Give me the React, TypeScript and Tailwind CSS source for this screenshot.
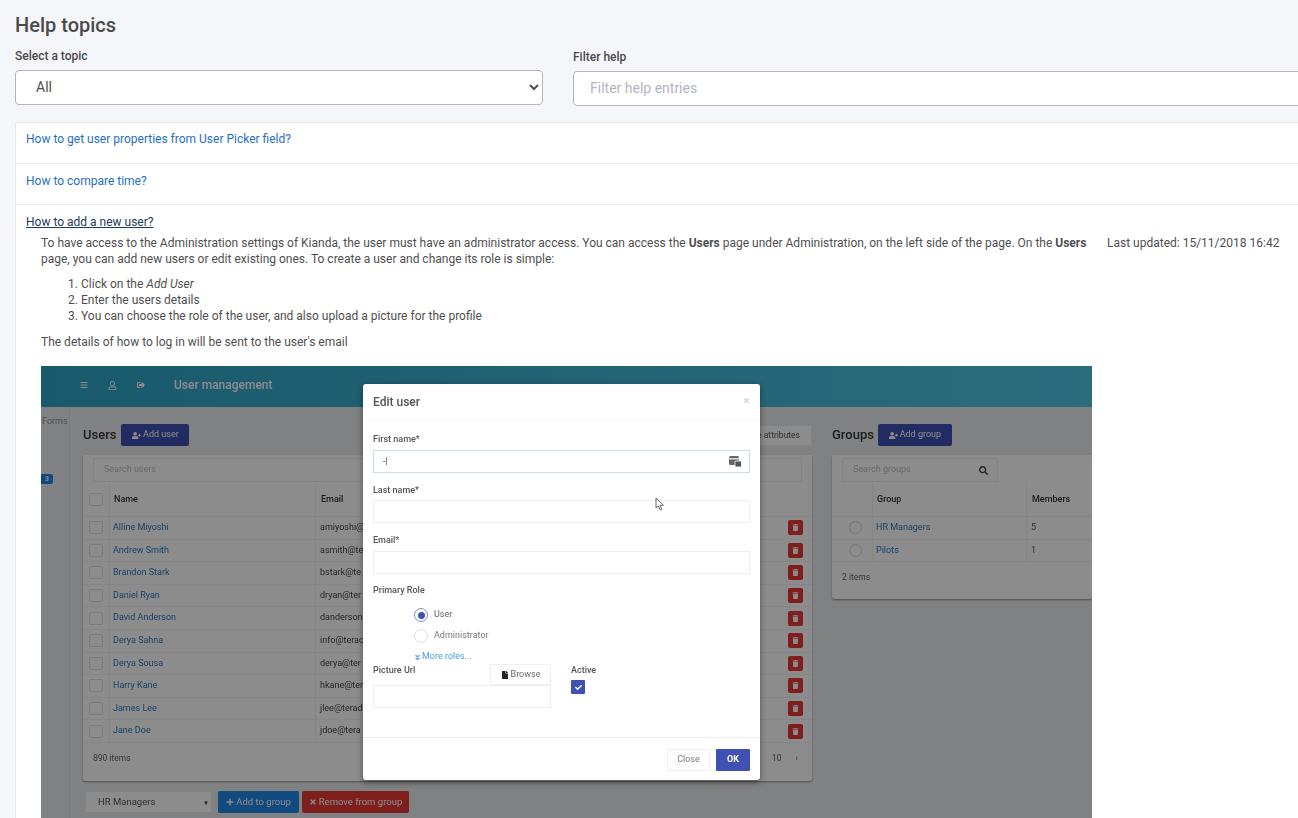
import { FaAngleDoubleDown, FaBars, FaCheck, FaFile, FaPlus, FaRegUser, FaSearch, FaSignOutAlt, FaTimes, FaTrash, FaUserPlus } from "react-icons/fa";

const users = [
  ["Alline Miyoshi", "amiyoshi@"],
  ["Andrew Smith", "asmith@te"],
  ["Brandon Stark", "bstark@te"],
  ["Daniel Ryan", "dryan@ter"],
  ["David Anderson", "danderson"],
  ["Derya Sahna", "info@terac"],
  ["Derya Sousa", "derya@ter"],
  ["Harry Kane", "hkane@ter"],
  ["James Lee", "jlee@terad"],
  ["Jane Doe", "jdoe@tera"],
];

function UserRow({ name, email }: { name: string; email: string }) {
  return (
    <div className="flex h-[22.6px] items-center border-b border-[#f4f4f4] text-[9px]">
      <div className="flex w-[26px] shrink-0 justify-center">
        <div className="h-[13px] w-[14px] rounded-[2px] border border-[#e2e2e2]" />
      </div>
      <div className="flex h-full w-[207px] shrink-0 items-center border-x border-[#f4f4f4] pl-[3px] text-[#2b79c2]">{name}</div>
      <div className="grow pl-[4px] text-[#444]">{email}</div>
      <div className="flex w-[33px] shrink-0 justify-center">
        <div className="flex h-[15px] w-[15px] items-center justify-center rounded-[2px] bg-[#e53935] text-white">
          <FaTrash className="text-[7px]" />
        </div>
      </div>
    </div>
  );
}

function ImageShot() {
  return (
    <div className="relative h-[452px] w-[1051px] overflow-hidden bg-[#eaebed] text-[#333] blur-[0.5px]">
      <div className="flex h-[41px] items-center bg-gradient-to-r from-[#2ea3c4] to-[#4fc5e4] pb-[3px] pl-[39px] text-white">
        <FaBars className="text-[8px]" />
        <FaRegUser className="ml-[20px] text-[9px]" />
        <FaSignOutAlt className="ml-[20px] text-[8px]" />
        <span className="ml-[29px] text-[12px] font-medium">User management</span>
      </div>
      <div className="flex h-[411px]">
        <div className="w-[29px] shrink-0 border-r border-[#dddddd] pt-[9px] text-[9px] leading-[11px]">
          <div className="pl-[1px] text-[#8f8f8f]">Forms</div>
          <div className="mt-[47px] flex h-[10px] w-[12px] items-center justify-center rounded-r-[2px] bg-[#1e88e5] text-[7px] font-bold text-white">3</div>
        </div>
        <div className="ml-[13px] w-[729px] shrink-0 pt-[17px]">
          <div className="flex h-[22px] items-center">
            <span className="-mt-[1px] text-[13px] font-medium">Users</span>
            <span className="ml-[5px] flex h-[22px] w-[68px] items-center justify-center gap-[2px] rounded-[2px] bg-[#3f51b5] text-[9px] text-white">
              <FaUserPlus className="text-[9px]" /> Add user
            </span>
            <span className="ml-auto flex h-[21px] w-[90px] items-center justify-end border border-[#eeeeee] bg-white pr-[11px] text-[8.5px] text-[#555]">e attributes</span>
          </div>
          <div className="mt-[9px] h-[326px] rounded-[2px] bg-white shadow-[0_1px_2px_rgba(0,0,0,0.4)]">
            <div className="px-[10px] pt-[3px]">
              <div className="flex h-[24px] items-center border border-[#eeeeee] pl-[10px] text-[9px] text-[#bdbdbd]">Search users</div>
            </div>
            <div className="flex h-[35px] items-center border-b border-[#f4f4f4] pt-[1px] text-[9px] font-medium">
              <div className="flex w-[26px] shrink-0 justify-center">
                <div className="h-[13px] w-[14px] rounded-[2px] border border-[#e2e2e2]" />
              </div>
              <div className="flex h-full w-[207px] shrink-0 items-center border-x border-[#f4f4f4] pl-[4px]">Name</div>
              <div className="pl-[5px]">Email</div>
            </div>
            {users.map((u) => (
              <UserRow key={u[0]} name={u[0]} email={u[1]} />
            ))}
            <div className="flex h-[41px] items-center justify-between pb-[10px] pl-[10px] pr-[14px] text-[8.5px] text-[#666]">
              <span>890 items</span>
              <span className="flex gap-[14px]">
                <span>10</span>
                <span>›</span>
              </span>
            </div>
          </div>
          <div className="mt-[10px] flex h-[22px] items-center text-[10px]">
            <div className="ml-[2px] flex h-full w-[127px] items-center justify-between border border-[#eeeeee] bg-white pl-[12px] pr-[2px] text-[9.5px] text-[#555]">
              HR Managers <span className="text-[6px] text-[#333]">▼</span>
            </div>
            <span className="ml-[6px] flex h-full w-[81px] items-center justify-center gap-[2px] rounded-[2px] bg-[#1e88e5] text-[9.5px] text-white">
              <FaPlus className="text-[8px]" /> Add to group
            </span>
            <span className="ml-[3px] flex h-full w-[107px] items-center justify-center gap-[2px] rounded-[2px] bg-[#e53935] text-[9.5px] text-white">
              <FaTimes className="text-[8px]" /> Remove from group
            </span>
          </div>
        </div>
        <div className="ml-[20px] grow pt-[17px]">
          <div className="flex h-[22px] items-center">
            <span className="-mt-[1px] text-[13px] font-medium">Groups</span>
            <span className="ml-[4px] flex h-[22px] w-[74px] items-center justify-center gap-[2px] rounded-[2px] bg-[#3f51b5] text-[9px] text-white">
              <FaUserPlus className="text-[9px]" /> Add group
            </span>
          </div>
          <div className="mt-[9px] h-[144px] rounded-[2px] bg-white shadow-[0_1px_2px_rgba(0,0,0,0.4)]">
            <div className="pl-[10px] pt-[3px]">
              <div className="flex h-[24px] w-[156px] items-center justify-between border border-[#eeeeee] pl-[10px] pr-[9px] text-[9px] text-[#bdbdbd]">
                Search groups <FaSearch className="text-[9px] text-[#444]" />
              </div>
            </div>
            <div className="flex h-[35px] items-center border-b border-[#f4f4f4] pt-[1px] text-[9px] font-medium">
              <div className="h-full w-[40px] shrink-0" />
              <div className="flex h-full w-[155px] shrink-0 items-center border-x border-[#f4f4f4] pl-[4px]">Group</div>
              <div className="pl-[5px]">Members</div>
            </div>
            {[["HR Managers", "5"], ["Pilots", "1"]].map((g) => (
              <div key={g[0]} className="flex h-[22.6px] items-center border-b border-[#f4f4f4] text-[9px]">
                <div className="flex w-[40px] shrink-0 justify-end pr-[10px]">
                  <div className="h-[13px] w-[13px] rounded-full border border-[#d8d8d8]" />
                </div>
                <div className="flex h-full w-[155px] shrink-0 items-center border-x border-[#f4f4f4] pl-[3px] text-[#2b79c2]">{g[0]}</div>
                <div className="pl-[4px] text-[#555]">{g[1]}</div>
              </div>
            ))}
            <div className="flex h-[32px] items-center pb-[2px] pl-[10px] text-[8.5px] text-[#666]">2 items</div>
          </div>
        </div>
      </div>

      <div className="absolute inset-0 bg-black/45" />

      <div className="absolute left-[322px] top-[18px] h-[396px] w-[397px] rounded-[3px] bg-white text-[9px] text-[#555] shadow-[0_2px_6px_rgba(0,0,0,0.45)]">
        <div className="flex h-[37px] items-center justify-between border-b border-[#f6f6f6] pl-[10px] pr-[10px]">
          <span className="text-[12px] font-medium">Edit user</span>
          <FaTimes className="-mt-[4px] text-[7px] text-[#cfcfcf]" />
        </div>
        <div className="px-[10px] pt-[12px]">
          <div className="h-[12px] font-medium leading-[12px]">First name*</div>
          <div className="mt-[5px] flex h-[23px] items-center justify-between border border-[#cfdde4] pl-[9px] pr-[7px]">
            <span className="text-[#444]">-|</span>
            <svg width="13" height="13" viewBox="0 0 13 13">
              <rect x="0" y="1" width="10" height="9" rx="1.5" fill="#666" />
              <rect x="0" y="3" width="10" height="1.5" fill="#ddd" />
              <rect x="6" y="6" width="6.5" height="6" rx="1" fill="#555" stroke="#fff" strokeWidth="0.8" />
            </svg>
          </div>
          <div className="mt-[11px] h-[12px] font-medium leading-[12px]">Last name*</div>
          <div className="mt-[4px] h-[23px] border border-[#ebeff2]" />
          <div className="mt-[11px] h-[12px] font-medium leading-[12px]">Email*</div>
          <div className="mt-[5px] h-[23px] border border-[#ebeff2]" />
          <div className="mt-[10px] h-[12px] font-medium leading-[12px]">Primary Role</div>
          <div className="ml-[41px] mt-[12px] flex h-[14px] items-center gap-[6px]">
            <span className="flex h-[14px] w-[14px] items-center justify-center rounded-full border border-[#7d8bd6]">
              <span className="h-[7px] w-[7px] rounded-full bg-[#3f51b5]" />
            </span>
            <span className="text-[#666]">User</span>
          </div>
          <div className="ml-[41px] mt-[7px] flex h-[14px] items-center gap-[6px]">
            <span className="h-[14px] w-[14px] rounded-full border border-[#dddddd]" />
            <span className="text-[#777]">Administrator</span>
          </div>
          <div className="ml-[41px] mt-[8px] flex h-[12px] items-center gap-[1px] text-[#4a9be0]">
            <FaAngleDoubleDown className="text-[7px]" /> More roles...
          </div>
          <div className="mt-[1px] flex">
            <div className="w-[178px] shrink-0">
              <div className="flex h-[21px] items-start justify-between">
                <span className="font-medium leading-[12px]">Picture Url</span>
                <span className="flex h-[21px] w-[61px] items-center justify-center gap-[2px] border border-[#f0f0f0] text-[#666]">
                  <FaFile className="text-[8px] text-[#222]" /> Browse
                </span>
              </div>
              <div className="h-[23px] border border-[#ebeff2]" />
            </div>
            <div className="ml-[20px]">
              <div className="font-medium leading-[12px]">Active</div>
              <div className="mt-[4px] flex h-[14px] w-[14px] items-center justify-center rounded-[1px] bg-[#3f51b5] text-white">
                <FaCheck className="text-[7px]" />
              </div>
            </div>
          </div>
        </div>
        <div className="mt-[29px] flex h-[42px] items-center justify-end gap-[6px] border-t border-[#eeeeee] px-[10px] pt-[3px]">
          <span className="flex h-[22px] w-[43px] items-center justify-center border border-[#f0f0f0] text-[#777]">Close</span>
          <span className="flex h-[22px] w-[34px] items-center justify-center rounded-[1px] bg-[#3f51b5] font-bold text-white">OK</span>
        </div>
        <svg className="absolute left-[292px] top-[113px]" width="10" height="15" viewBox="0 0 10 15">
          <path d="M1 1 L1 11 L3.4 8.9 L5.2 13 L6.8 12.2 L5 8.4 L8.4 8.2 Z" fill="#fff" stroke="#555" strokeWidth="0.9" />
        </svg>
      </div>
    </div>
  );
}

export default function App() {
  return (
    <div className="h-[818px] w-[1298px] overflow-hidden bg-[#f5f6fa] pl-[15px] pt-[13px] font-['Roboto',sans-serif] text-[12px] text-[#4f4f4f]">
      <h1 className="text-[20px] font-medium leading-[24px] text-[#4a4a4a]">Help topics</h1>
      <div className="mt-[11px] flex w-[1320px]">
        <div className="w-[528px] shrink-0">
          <label className="block text-[12px] font-medium leading-[16px] text-[#4a4a4a]">Select a topic</label>
          <select className="mt-[6px] block h-[35px] w-full rounded-[4px] border border-[#b5b5b8] bg-white pb-[2px] pl-[16px] pr-[8px] text-[14px] text-[#4f4f4f]">
            <option>All</option>
          </select>
        </div>
        <div className="ml-[30px] grow pt-[1px]">
          <label className="block text-[12px] font-medium leading-[16px] text-[#4a4a4a]">Filter help</label>
          <input
            placeholder="Filter help entries"
            className="mt-[6px] block h-[35px] w-full rounded-[4px] border border-[#b5b5b8] bg-white pb-[2px] pl-[16px] text-[14px] placeholder:text-[#b3b5c0]"
          />
        </div>
      </div>
      <div className="mt-[16px] w-[1320px] border border-[#e8ebee] bg-white">
        <div className="h-[41px] border-b border-[#e8ebee] pl-[10px] pt-[8px] leading-[16px] text-[#1f6fc4]">How to get user properties from User Picker field?</div>
        <div className="h-[41px] border-b border-[#e8ebee] pl-[10px] pt-[9px] leading-[16px] text-[#1f6fc4]">How to compare time?</div>
        <div className="pl-[10px] pt-[8px]">
          <span className="leading-[16px] text-[#1f3a55] underline">How to add a new user?</span>
          <div className="mt-[4px] flex pl-[15px]">
            <div className="w-[1051px] shrink-0">
              <p className="w-[1049px] leading-[16px]">
                To have access to the Administration settings of Kianda, the user must have an administrator access. You can access the <b className="font-bold">Users</b> page under Administration, on the left side of the page. On the <b className="font-bold">Users</b> page, you can add new users or edit existing ones. To create a user and change its role is simple:
              </p>
              <ol className="mt-[9px] list-decimal pl-[40px] leading-[16px]">
                <li>Click on the <i>Add User</i></li>
                <li>Enter the users details</li>
                <li>You can choose the role of the user, and also upload a picture for the profile</li>
              </ol>
              <p className="mt-[10px] leading-[16px]">The details of how to log in will be sent to the user's email</p>
              <div className="mt-[16px]">
                <ImageShot />
              </div>
            </div>
            <div className="ml-[15px] shrink-0 leading-[16px]">Last updated: 15/11/2018 16:42</div>
          </div>
        </div>
      </div>
    </div>
  );
}
